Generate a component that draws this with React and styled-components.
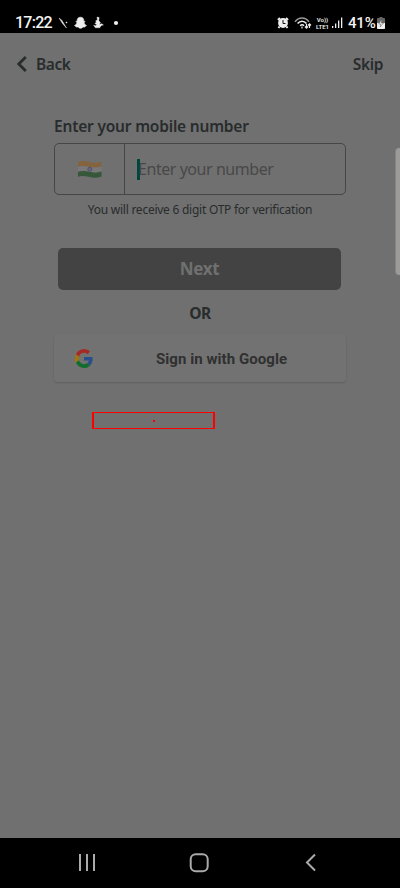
import React from 'react';
import styled, { createGlobalStyle } from 'styled-components';

const GlobalStyle = createGlobalStyle`
  * { box-sizing: border-box; }
  body { margin: 0; background: #707070; overflow: hidden; }
`;
const Screen = styled.div`
  position: relative;
  width: 400px;
  height: 888px;
  display: flex;
  flex-direction: column;
  background: #707070;
  color: #282c2d;
  font-family: 'Noto Sans', 'Open Sans', sans-serif;
`;
const StatusBar = styled.header`
  height: 33px;
  flex: none;
  display: flex;
  justify-content: space-between;
  padding: 13px 15px 0 15px;
  background: #000;
  color: #f2f2f2;
  font-family: Roboto, sans-serif;
`;
const StatusGroup = styled.div`
  display: flex;
  height: 20px;
  align-items: center;
`;
const Clock = styled.span`
  width: 44px;
  font-size: 16px;
  font-weight: 500;
  line-height: 20px;
  letter-spacing: -0.75px;
`;
const Percent = styled.span`
  width: 29px;
  font-size: 15px;
  font-weight: 500;
  line-height: 20px;
  letter-spacing: -0.2px;
`;
const Volte = styled.span`
  display: flex;
  flex-direction: column;
  width: 15px;
  align-items: center;
  font-size: 6px;
  font-weight: 600;
  line-height: 7px;
`;
const VolteLine = styled.span`
  display: block;
  height: 7px;
  white-space: nowrap;
`;
const Glyph = styled.svg`
  display: block;
  flex: none;
  overflow: visible;
`;
const TopNav = styled.nav`
  display: flex;
  justify-content: space-between;
  height: 62px;
  padding: 0 17px;
  align-items: center;
  flex: none;
`;
const NavButton = styled.button`
  display: flex;
  align-items: center;
  gap: 9px;
  padding: 0;
  border: 0;
  background: none;
  color: inherit;
  font: 600 15.5px/22px 'Noto Sans', sans-serif;
  letter-spacing: -0.4px;
`;
const Form = styled.main`
  flex: 1;
  display: flex;
  flex-direction: column;
  padding: 20px 54px 0;
`;
const Label = styled.label`
  height: 28px;
  font-size: 15.5px;
  font-weight: 600;
  line-height: 23px;
  letter-spacing: -0.2px;
  white-space: nowrap;
`;
const PhoneField = styled.div`
  display: flex;
  width: 292px;
  height: 52px;
  border: 1px solid #464646;
  border-radius: 5px;
`;
const Country = styled.div`
  display: flex;
  width: 70px;
  align-items: center;
  justify-content: center;
  border-right: 1px solid #464646;
`;
const Entry = styled.div`
  display: flex;
  align-items: center;
  padding-left: 12px;
  color: #484848;
  font-size: 16px;
  letter-spacing: -0.45px;
  white-space: nowrap;
`;
const Caret = styled.span`
  width: 3px;
  height: 21px;
  margin-right: -2px;
  background: #00473b;
`;
const Hint = styled.p`
  height: 30px;
  margin: 0;
  font-size: 12px;
  line-height: 30px;
  letter-spacing: -0.25px;
  text-align: center;
  white-space: nowrap;
`;
const NextButton = styled.button`
  width: 283px;
  height: 42px;
  margin: 23px 0 0 4px;
  padding: 0;
  border: 0;
  border-radius: 5px;
  background: #434343;
  color: #707070;
  font: 700 17px/42px 'Noto Sans', sans-serif;
  letter-spacing: -0.3px;
`;
const Or = styled.div`
  height: 44px;
  font-size: 15.5px;
  font-weight: 700;
  line-height: 47px;
  letter-spacing: -0.5px;
  text-align: center;
`;
const GoogleButton = styled.button`
  width: 292px;
  height: 48px;
  display: flex;
  align-items: center;
  gap: 63px;
  padding: 1px 0 0 21px;
  border: 0;
  border-radius: 4px;
  background: #727272;
  box-shadow: 0 1px 2px #606060;
  color: #303030;
  font: 700 15px/20px Roboto, sans-serif;
  letter-spacing: 0.06px;
  white-space: nowrap;
`;
const Marker = styled.div`
  display: flex;
  width: 123px;
  height: 17px;
  margin: 30px 0 0 38px;
  align-items: center;
  justify-content: center;
  border: solid #f00;
  border-width: 1px 2px;
`;
const MarkerDot = styled.span`
  width: 2px;
  height: 2px;
  background: #f00;
`;
const EdgeHandle = styled.div`
  position: absolute;
  right: 0;
  top: 148px;
  width: 5px;
  height: 127px;
  border-radius: 4px 0 0 4px;
  background: #9c9b99;
  border-left: 1px solid #858585;
`;
const SystemNav = styled.footer`
  height: 50px;
  flex: none;
  display: grid;
  grid-template-columns: 112px 112px 112px;
  justify-content: center;
  justify-items: center;
  align-items: center;
  padding-right: 2px;
  background: #000;
`;

const StatusIcons = () => (
  <Glyph width="62" height="14" viewBox="0 0 62 14" fill="#eee">
    <path d="M0 2 3 4.5 7.5 12 3.5 7.5ZM7 6h1v1H7Z" stroke="#ddd" strokeWidth=".5" />
    <path d="M21.5 1.2c-2.4 0-3.5 1.6-3.3 4l-1.3.2 1 1.3c-.4 1.5-1.4 2.4-2.4 2.8.5.9 1.6.8 2 1.6 1 0 1.7-.2 2.4.6 1 .8 2.4.8 3.3 0 .7-.7 1.4-.6 2.4-.6.3-.8 1.4-.7 1.9-1.6-1.1-.4-2-1.3-2.4-2.8l1-1.3-1.3-.2c.1-2.4-.9-4-3.3-4Z" stroke="#eee" strokeWidth=".6" />
    <path d="m38 1 2.2.6-.5 3 1.7 1.8-1.2 2.1 2.4-.8 1.8 1.2-2.2.6-1.5 2.3h-4.3l-1.8-2.5 2 .5 1.2-1.2-2-1.1 1.5-1.3-.6-1.4 1.7-.8Z" stroke="#eee" strokeWidth=".4" />
    <circle cx="57" cy="7" r="2.1" />
  </Glyph>
);
const Alarm = () => (
  <Glyph width="12" height="12" viewBox="0 0 12 12">
    <path d="M1 3 3 1M11 3 9 1M2.5 9.5 1.5 11M9.5 9.5l1 1.5" stroke="#eee" strokeWidth="2" />
    <circle cx="6" cy="6" r="4.9" fill="#eee" />
    <path d="M6 3v3.5h2.5" stroke="#111" fill="none" />
  </Glyph>
);
const Wifi = () => (
  <Glyph width="17" height="13" viewBox="0 0 17 13" fill="none" stroke="#eee" strokeWidth="1.5">
    <path d="M0 4.7C4-.2 10-.2 14 4.7" stroke="#999" />
    <path d="M2.6 6.5c2.6-3.1 6.3-3.1 8.9 0M5.2 8.7c1.2-1.4 2.6-1.4 3.8 0" />
    <path d="M7 9.5v2M11.5 7v4m-1.5-1.5 1.5 1.6 1.5-1.6M14.5 11V7M13 8.5l1.5-1.6L16 8.5" strokeWidth="1.2" />
  </Glyph>
);
const Signal = () => (
  <Glyph width="11" height="12" viewBox="0 0 11 12" fill="#eee">
    <path d="M0 9h1.3v2H0ZM3 6.5h1.3V11H3ZM6 3.5h1.3V11H6ZM9 .5h1.3V11H9Z" />
  </Glyph>
);
const Battery = () => (
  <Glyph width="8" height="12" viewBox="0 0 8 12">
    <path d="M2.5 1V0h3v1H7q1 0 1 1v9q0 1-1 1H1q-1 0-1-1V2q0-1 1-1Z" fill="#666" />
    <path d="M0 6h8v5q0 1-1 1H1q-1 0-1-1Z" fill="#eee" />
    <path d="M4.7 2.2 1.7 7h2l-.5 3L6.5 6H4.4Z" fill="#eee" stroke="#555" strokeWidth=".5" />
  </Glyph>
);
const Flag = () => (
  <Glyph width="24" height="18" viewBox="0 0 24 18">
    <path d="M.3 1.8C4 .2 8 1 12 2s7 .8 11-.6l.5 5.3c-4.5 2-8 1-12 .2S4 5.800 0 7Z" fill="#85633f" />
    <path d="M0 6.800c4-1.300 7-.8 11 0s8 1.200 12.600-.4v5.200c-5 2-9 1-13 .2s-7-.8-10.600.3Z" fill="#797777" />
    <path d="M0 11.800c4-1.200 7-.9 11 0s8 1.400 12.500-.3v5c-4 1.700-8 1.300-12 .5s-7.500-1.600-11.500-.3Z" fill="#36573a" />
    <circle cx="11.800" cy="9.200" r="2" fill="#66667b" stroke="#4b4b6b" strokeWidth=".8" />
  </Glyph>
);
const GoogleLogo = () => (
  <Glyph width="18" height="19" viewBox="0 0 48 48" preserveAspectRatio="none">
    <path fill="#a52a23" d="M24 9.500c3.500 0 6.700 1.200 9.200 3.600l6.900-6.900C35.900 2.400 30.500 0 24 0 14.600 0 6.500 5.400 2.600 13.200l8 6.200C12.400 13.700 17.700 9.500 24 9.500Z" />
    <path fill="#294f8b" d="M47 24.600c0-1.600-.2-3.100-.4-4.600H24v9h12.900c-.6 3-2.200 5.500-4.700 7.200l7.700 6C44.400 38 47 31.800 47 24.600Z" />
    <path fill="#a37705" d="M10.500 28.600c-1-3-1-6.200 0-9.200l-8-6.200c-3.300 6.800-3.300 14.800 0 21.600Z" />
    <path fill="#116d2d" d="M24 48c6.500 0 11.900-2.100 15.900-5.800l-7.700-6C26.900 39.800 15 39.600 10.500 28.600l-8 6.200C6.500 42.600 14.600 48 24 48Z" />
  </Glyph>
);

export default function App() {
  return (
    <>
      <GlobalStyle />
      <Screen>
        <StatusBar>
          <StatusGroup><Clock>17:22</Clock><StatusIcons /></StatusGroup>
          <StatusGroup>
            <Alarm />
            <Glyph width="6" height="1" />
            <Wifi />
            <Glyph width="3" height="1" />
            <Volte><VolteLine>Vo))</VolteLine><VolteLine>LTE1</VolteLine></Volte>
            <Glyph width="2" height="1" />
            <Signal />
            <Glyph width="5" height="1" />
            <Percent>41%</Percent>
            <Battery />
          </StatusGroup>
        </StatusBar>
        <TopNav>
          <NavButton>
            <Glyph width="10" height="16" viewBox="0 0 10 16" fill="none" stroke="currentColor" strokeWidth="2.8"><path d="M8.800 1 1.800 8l7 7" /></Glyph>
            Back
          </NavButton>
          <NavButton>Skip</NavButton>
        </TopNav>
        <Form>
          <Label>Enter your mobile number</Label>
          <PhoneField>
            <Country><Flag /></Country>
            <Entry><Caret />Enter your number</Entry>
          </PhoneField>
          <Hint>You will receive 6 digit OTP for verification</Hint>
          <NextButton>Next</NextButton>
          <Or>OR</Or>
          <GoogleButton><GoogleLogo />Sign in with Google</GoogleButton>
          <Marker><MarkerDot /></Marker>
        </Form>
        <SystemNav>
          <Glyph width="20" height="18" viewBox="0 0 20 18" stroke="#aaa" strokeWidth="2"><path d="M3 0v17M10 0v17M17 0v17" /></Glyph>
          <Glyph width="20" height="20" viewBox="0 0 20 20" fill="none" stroke="#aaa" strokeWidth="2"><rect x="1.700" y="1.200" width="17" height="17" rx="5" /></Glyph>
          <Glyph width="12" height="18" viewBox="0 0 12 18" fill="none" stroke="#aaa" strokeWidth="2"><path d="M10 .5 2 8.500l8 8" /></Glyph>
        </SystemNav>
        <EdgeHandle />
      </Screen>
    </>
  );
}
